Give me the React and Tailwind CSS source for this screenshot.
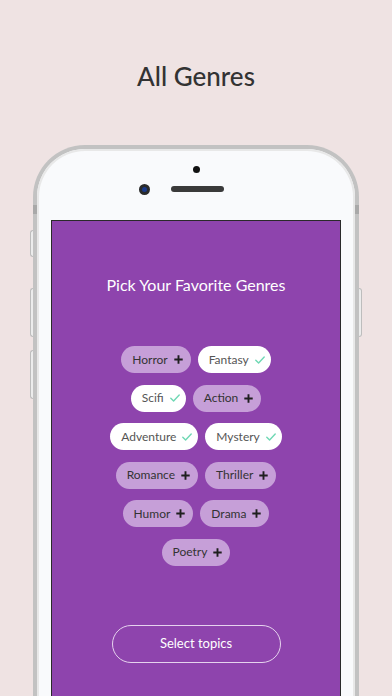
import React from "react";

const genres = [
  [["Horror", false], ["Fantasy", true]],
  [["Scifi", true], ["Action", false]],
  [["Adventure", true], ["Mystery", true]],
  [["Romance", false], ["Thriller", false]],
  [["Humor", false], ["Drama", false]],
  [["Poetry", false]],
];

function Plus() {
  return (
    <svg width="9" height="9" viewBox="0 0 9 9" className="shrink-0">
      <path d="M4.5 0.3v8.4M0.3 4.5h8.4" stroke="#1f1f1f" strokeWidth="1.9" fill="none" />
    </svg>
  );
}

function Check() {
  return (
    <svg width="10" height="8" viewBox="0 0 10 8" className="shrink-0">
      <path d="M0.8 4.2l2.8 2.8L9.2 1.1" stroke="#6fd8b4" strokeWidth="1.4" fill="none" strokeLinecap="round" strokeLinejoin="round" />
    </svg>
  );
}

function Pill({ label, selected }) {
  return (
    <div
      className={
        selected
          ? "flex h-[27px] items-center gap-[6px] rounded-full bg-white pl-[11px] pr-[6px] text-[12px] text-[#555]"
          : "flex h-[27px] items-center gap-[6px] rounded-full bg-[#c69fd8] pl-[11px] pr-[8px] text-[12px] text-[#333]"
      }
    >
      <span className="leading-none">{label}</span>
      {selected ? <Check /> : <Plus />}
    </div>
  );
}

export default function App() {
  return (
    <div
      className="relative h-[696px] w-[392px] overflow-hidden bg-[#efe3e3]"
      style={{ fontFamily: "Lato, 'Open Sans', sans-serif" }}
    >
      <div className="flex h-[145px] justify-center pt-[61px]">
        <h1 className="text-[26px] font-medium leading-[30px] text-[#333]">All Genres</h1>
      </div>

      <div className="relative mx-[33px] h-[600px] rounded-t-[52px] border-[4px] border-b-0 border-[#c2c2c2] bg-[#f9fafc]">
        <div className="pointer-events-none absolute inset-0 rounded-t-[48px] border-[2px] border-b-0 border-[#e8e8e8]" />
        {/* antenna bands */}
        <div className="absolute left-[-4px] top-[56px] h-[9px] w-[4px] bg-[#a9a9a9]" />
        <div className="absolute right-[-4px] top-[56px] h-[9px] w-[4px] bg-[#a9a9a9]" />
        {/* side buttons */}
        <div className="absolute left-[-7px] top-[81px] h-[27px] w-[3px] rounded-l-sm border border-r-0 border-[#bdbdbd] bg-[#ececec]" />
        <div className="absolute left-[-7px] top-[139px] h-[49px] w-[3px] rounded-l-sm border border-r-0 border-[#bdbdbd] bg-[#ececec]" />
        <div className="absolute left-[-7px] top-[201px] h-[49px] w-[3px] rounded-l-sm border border-r-0 border-[#bdbdbd] bg-[#ececec]" />
        <div className="absolute right-[-7px] top-[139px] h-[49px] w-[3px] rounded-r-sm border border-l-0 border-[#bdbdbd] bg-[#ececec]" />

        <div className="flex flex-col items-center">
          <div className="mt-[17px] h-[7px] w-[7px] rounded-full bg-[#111]" />
          <div className="mt-[10px] flex h-[12px] w-full items-center">
            <div className="ml-[102px] flex h-[11px] w-[11px] items-center justify-center rounded-full bg-[#2a2a2a]">
              <div className="h-[5px] w-[5px] rounded-full bg-[#1a3a8a]" />
            </div>
            <div className="ml-[21px] h-[6px] w-[53px] rounded-full bg-[#3a3a3a]" />
          </div>
        </div>

        <div className="mx-[14px] mt-[25px] flex h-[480px] flex-col items-center border border-b-0 border-[#2a2a2a] bg-[#8e44ad]">
          <p className="mt-[54px] text-[16px] leading-[20px] text-white">Pick Your Favorite Genres</p>
          <div className="mt-[51px] flex flex-col items-center gap-[11.5px]">
            {genres.map((row, i) => (
              <div key={i} className="flex gap-[7px]">
                {row.map(([g, s]) => (
                  <Pill key={g} label={g} selected={s} />
                ))}
              </div>
            ))}
          </div>
          <button className="mt-[59px] flex h-[38px] w-[169px] items-center justify-center rounded-full border border-[#e6d3ee] text-[13px] text-white">
            Select topics
          </button>
        </div>
      </div>
    </div>
  );
}
